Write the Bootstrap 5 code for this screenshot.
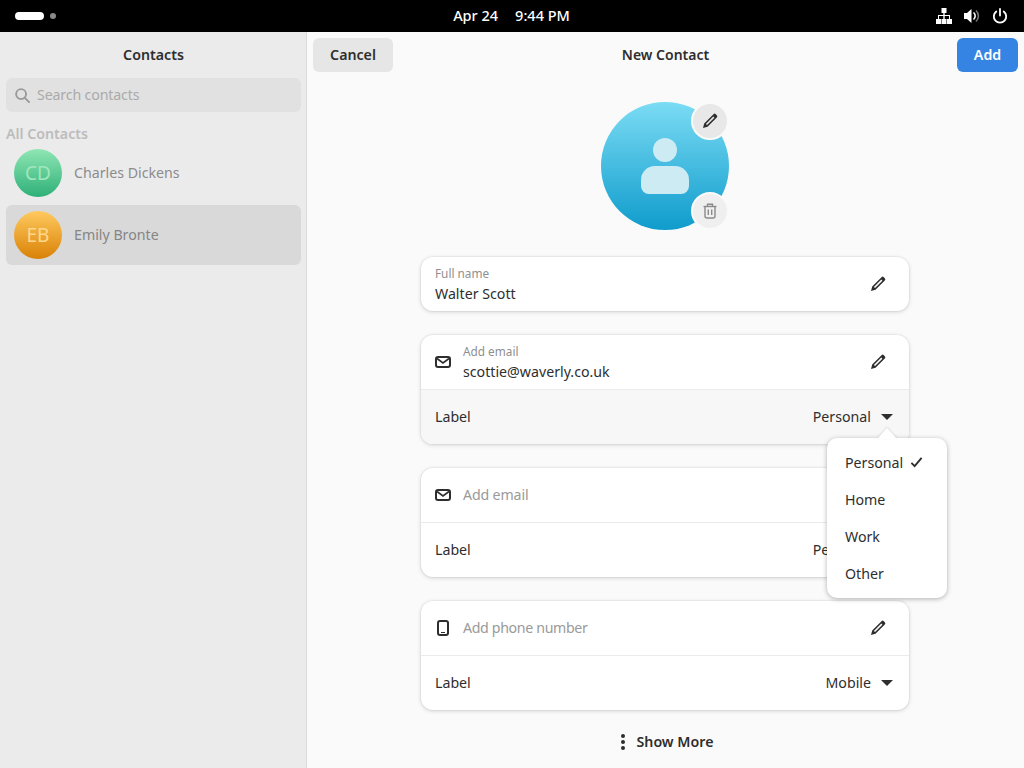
<!DOCTYPE html>
<html lang="en">
<head>
<meta charset="UTF-8">
<meta name="viewport" content="width=device-width, initial-scale=1.0">
<title>Contacts</title>
<link href="https://cdn.jsdelivr.net/npm/bootstrap@5.3.0/dist/css/bootstrap.min.css" rel="stylesheet">
<style>
    html, body { height: 768px; overflow: hidden; }
    body { font-family: "Noto Sans", "Open Sans", sans-serif; font-size: 14.2px; color: #2e2e2e; background: #fafafa; }
    .top-bar { height: 32px; background: #000; color: #fff; font-weight: 500; font-size: 14.5px; padding: 0 16px 0 15px; }
    .top-side { width: 200px; }
    .tray { gap: 12px; }
    .pill-on { width: 29px; height: 8px; border-radius: 4px; background: #fff; }
    .pill-off { width: 6px; height: 6px; border-radius: 50%; background: #8a8a8a; margin-left: 6px; }
    .clock { gap: 17px; }
    .shell { height: 736px; }
    .side-pane { width: 307px; background: #ebebeb; border-right: 1px solid #dcdcdc; padding: 0 5px 0 6px; }
    .side-title { height: 46px; font-weight: 600; }
    .search-box { height: 34px; background: #e1e1e1; border-radius: 6px; padding: 0 9px; color: #aaa; gap: 7px; letter-spacing: -.15px; }
    .group-title { font-weight: 600; color: #bcbcbc; margin-top: 12px; height: 19px; line-height: 19px; }
    .person { height: 60px; border-radius: 6px; padding: 0 8px; margin-bottom: 2px; color: #8c8c8c; gap: 12px; }
    .person-on { background: #d9d9d9; color: #858585; }
    .face { width: 48px; height: 48px; border-radius: 50%; font-size: 19px; }
    .face-green { background: linear-gradient(#8fe6b4, #2eb077); color: #a0e6bd; }
    .face-orange { background: linear-gradient(#ffc95f, #d98206); color: #ffd88c; }
    .main-pane { min-width: 0; }
    .head-bar { height: 46px; padding: 6px 6px 0; }
    .head-end { flex: 1 1 0; }
    .gbtn { height: 34px; border-radius: 6px; border: 0; font-weight: 600; font-size: 14.2px; padding: 0; }
    .gbtn-grey { width: 80px; background: #e6e6e6; color: #2e2e2e; }
    .gbtn-blue { width: 61px; background: #3584e4; color: #fff; }
    .head-title { font-weight: 600; height: 32px; font-size: 14px; }
    .photo-wrap { width: 128px; height: 128px; margin: 24px 0 27px 294px; position: relative; }
    .photo { width: 128px; height: 128px; border-radius: 50%; background: linear-gradient(#7bdcf4, #0f9ccc); }
    .photo-btn { position: absolute; right: 0; width: 38px; height: 38px; border-radius: 50%; border: 2px solid #fafafa; background: #e8e8e8; }
    .photo-edit { top: 0; }
    .photo-del { bottom: 0; background: #efefef; }
    .form-col { width: 488px; margin-left: 114px; gap: 24px; }
    .box { border: 0; border-radius: 12px; background: #fff; box-shadow: 0 0 0 1px rgba(0,0,0,.03), 0 1px 4px rgba(0,0,0,.16); }
    .box-row { height: 54px; padding: 0 14px; }
    .box-row + .box-row { border-top: 1px solid #ebebeb; height: 55px; }
    .row-shade { background: #f7f7f7; border-radius: 0 0 12px 12px; }
    .field-stack { padding-top: 2px; }
    .tiny-label { font-size: 11.8px; color: #8f8f8f; line-height: 15px; }
    .field-text { line-height: 22px; padding-top: 2px; }
    .hint { color: #9a9a9a; letter-spacing: -.15px; }
    .hint-long { letter-spacing: -.35px; }
    .lead-icon { width: 16px; margin-right: 12px; }
    .edit-btn { margin-right: 9px; }
    .combo { gap: 10px; margin-right: 2px; }
    .caret-down { width: 0; height: 0; border-left: 6px solid transparent; border-right: 6px solid transparent; border-top: 6px solid #2e2e2e; }
    .more-row { height: 64px; font-weight: 600; gap: 12px; width: 488px; margin-left: 114px; padding-left: 4px; }
    .pop-menu { position: absolute; left: 827px; top: 438px; width: 120px; height: 160px; background: #fff; border-radius: 10px; box-shadow: 0 1px 5px rgba(0,0,0,.3); padding: 6px 18px; z-index: 5; }
    .pop-menu::before { content: ""; position: absolute; left: 50px; top: -10px; border-left: 10px solid transparent; border-right: 10px solid transparent; border-bottom: 11px solid #fff; filter: drop-shadow(0 -1px 1px rgba(0,0,0,.12)); }
    .pop-item { height: 37px; gap: 7px; }
</style>
</head>
<body>
    <div class="top-bar d-flex align-items-center justify-content-between">
        <div class="top-side d-flex align-items-center">
            <span class="pill-on"></span><span class="pill-off"></span>
        </div>
        <div class="clock d-flex"><span>Apr 24</span><span>9:44 PM</span></div>
        <div class="top-side tray d-flex align-items-center justify-content-end">
            <svg width="16" height="16" viewBox="0 0 16 16" fill="#fff"><path d="M5.500 0h5v5H8.700v2H14v4h2v5h-5v-5h2V8H8.700v3h1.800v5h-5v-5h1.800V8H3v3h2v5H0v-5h2V7h5.300V5H5.500z"/></svg>
            <svg width="16" height="16" viewBox="0 0 16 16"><path d="M0 5h3l4.500-4v14L3 11H0z" fill="#fff"/><path d="M9.500 4.500a4.500 4.500 0 0 1 0 7" stroke="#fff" stroke-width="1.600" fill="none"/><path d="M12 2.500a7.500 7.500 0 0 1 0 11" stroke="#777" stroke-width="1.600" fill="none"/></svg>
            <svg width="16" height="16" viewBox="0 0 16 16" fill="none" stroke="#fff" stroke-width="1.800" stroke-linecap="round"><path d="M8 1v6.500"/><path d="M4.300 3.500a6.200 6.200 0 1 0 7.400 0"/></svg>
        </div>
    </div>

    <div class="shell d-flex">
        <div class="side-pane flex-shrink-0">
            <div class="side-title d-flex align-items-center justify-content-center">Contacts</div>
            <div class="search-box d-flex align-items-center">
                <svg width="15" height="15" viewBox="0 0 16 16" fill="none" stroke="#999" stroke-width="2"><circle cx="6.500" cy="6.500" r="5.300"/><path d="M10.500 10.500 15 15" stroke-linecap="round"/></svg>
                <span>Search contacts</span>
            </div>
            <div class="group-title">All Contacts</div>
            <div class="person d-flex align-items-center">
                <div class="face face-green d-flex align-items-center justify-content-center">CD</div>
                <span>Charles Dickens</span>
            </div>
            <div class="person person-on d-flex align-items-center">
                <div class="face face-orange d-flex align-items-center justify-content-center">EB</div>
                <span>Emily Bronte</span>
            </div>
        </div>

        <div class="main-pane flex-grow-1">
            <div class="head-bar d-flex align-items-start">
                <div class="head-end d-flex"><button class="btn gbtn gbtn-grey">Cancel</button></div>
                <div class="head-title d-flex align-items-center">New Contact</div>
                <div class="head-end d-flex justify-content-end"><button class="btn gbtn gbtn-blue">Add</button></div>
            </div>

            <div class="photo-wrap">
                <div class="photo d-flex align-items-center justify-content-center">
                    <svg width="48" height="56" viewBox="0 0 48 56" fill="#cdebf3"><circle cx="24" cy="12" r="12"/><path d="M14 28h20a14 14 0 0 1 14 14v6a8 8 0 0 1-8 8H8a8 8 0 0 1-8-8v-6a14 14 0 0 1 14-14z"/></svg>
                </div>
                <div class="photo-btn photo-edit d-flex align-items-center justify-content-center">
                    <svg width="16" height="16" viewBox="0 0 16 16" fill="#2e2e2e"><path d="M11.500 1.200a1.600 1.600 0 0 1 2.300 0l1 1a1.600 1.600 0 0 1 0 2.300L5.500 13.800 1 15l1.200-4.500z"/><path d="M3.900 11 11.300 3.600l1.100 1.100L5 12.100z" fill="#e8e8e8"/></svg>
                </div>
                <div class="photo-btn photo-del d-flex align-items-center justify-content-center">
                    <svg width="16" height="16" viewBox="0 0 16 16" fill="none" stroke="#8a8a8a" stroke-width="1.400"><path d="M1.500 3.500h13"/><path d="M5.500 3.500V1.200h5v2.300"/><path d="M3 3.500V13a2 2 0 0 0 2 2h6a2 2 0 0 0 2-2V3.500"/><path d="M6.300 6.500v5.500M9.700 6.500v5.500"/></svg>
                </div>
            </div>

            <div class="form-col d-flex flex-column">
                <div class="card box">
                    <div class="box-row d-flex align-items-center">
                        <div class="field-stack flex-grow-1">
                            <div class="tiny-label">Full name</div>
                            <div class="field-text">Walter Scott</div>
                        </div>
                        <svg class="edit-btn" width="16" height="16" viewBox="0 0 16 16" fill="#2e2e2e"><path d="M11.500 1.200a1.600 1.600 0 0 1 2.300 0l1 1a1.600 1.600 0 0 1 0 2.300L5.500 13.800 1 15l1.200-4.500z"/><path d="M3.900 11 11.300 3.600l1.100 1.100L5 12.100z" fill="#fff"/></svg>
                    </div>
                </div>

                <div class="card box">
                    <div class="box-row d-flex align-items-center">
                        <svg class="lead-icon" width="16" height="16" viewBox="0 0 16 16" fill="none" stroke="#2e2e2e" stroke-width="2"><rect x="1" y="3" width="14" height="10" rx="2"/><path d="M2 4.500 8 9l6-4.500" stroke-width="1.600"/></svg>
                        <div class="field-stack flex-grow-1">
                            <div class="tiny-label">Add email</div>
                            <div class="field-text">scottie@waverly.co.uk</div>
                        </div>
                        <svg class="edit-btn" width="16" height="16" viewBox="0 0 16 16" fill="#2e2e2e"><path d="M11.500 1.200a1.600 1.600 0 0 1 2.300 0l1 1a1.600 1.600 0 0 1 0 2.300L5.500 13.800 1 15l1.200-4.500z"/><path d="M3.900 11 11.300 3.600l1.100 1.100L5 12.100z" fill="#fff"/></svg>
                    </div>
                    <div class="box-row row-shade d-flex align-items-center justify-content-between">
                        <span>Label</span>
                        <div class="combo d-flex align-items-center"><span>Personal</span><span class="caret-down"></span></div>
                    </div>
                </div>

                <div class="card box">
                    <div class="box-row d-flex align-items-center">
                        <svg class="lead-icon" width="16" height="16" viewBox="0 0 16 16" fill="none" stroke="#2e2e2e" stroke-width="2"><rect x="1" y="3" width="14" height="10" rx="2"/><path d="M2 4.500 8 9l6-4.500" stroke-width="1.600"/></svg>
                        <div class="flex-grow-1 hint">Add email</div>
                    </div>
                    <div class="box-row d-flex align-items-center justify-content-between">
                        <span>Label</span>
                        <div class="combo d-flex align-items-center"><span>Personal</span><span class="caret-down"></span></div>
                    </div>
                </div>

                <div class="card box">
                    <div class="box-row d-flex align-items-center">
                        <svg class="lead-icon" width="16" height="16" viewBox="0 0 16 16" fill="none" stroke="#2e2e2e" stroke-width="2"><rect x="3" y="1" width="10" height="14" rx="2"/><path d="M6 12.500h4" stroke-width="1"/></svg>
                        <div class="flex-grow-1 hint hint-long">Add phone number</div>
                        <svg class="edit-btn" width="16" height="16" viewBox="0 0 16 16" fill="#2e2e2e"><path d="M11.500 1.200a1.600 1.600 0 0 1 2.300 0l1 1a1.600 1.600 0 0 1 0 2.300L5.500 13.800 1 15l1.200-4.500z"/><path d="M3.900 11 11.300 3.600l1.100 1.100L5 12.100z" fill="#fff"/></svg>
                    </div>
                    <div class="box-row d-flex align-items-center justify-content-between">
                        <span>Label</span>
                        <div class="combo d-flex align-items-center"><span>Mobile</span><span class="caret-down"></span></div>
                    </div>
                </div>
            </div>

            <div class="more-row d-flex align-items-center justify-content-center">
                <svg width="4" height="16" viewBox="0 0 4 16" fill="#2e2e2e"><circle cx="2" cy="2" r="2"/><circle cx="2" cy="8" r="2"/><circle cx="2" cy="14" r="2"/></svg>
                <span>Show More</span>
            </div>
        </div>
    </div>

    <div class="pop-menu">
        <div class="pop-item d-flex align-items-center">
            <span>Personal</span>
            <svg width="13" height="13" viewBox="0 0 14 14" fill="none" stroke="#2e2e2e" stroke-width="2"><path d="M1.500 7.500 5 11l7.500-9"/></svg>
        </div>
        <div class="pop-item d-flex align-items-center">Home</div>
        <div class="pop-item d-flex align-items-center">Work</div>
        <div class="pop-item d-flex align-items-center">Other</div>
    </div>
</body>
</html>
